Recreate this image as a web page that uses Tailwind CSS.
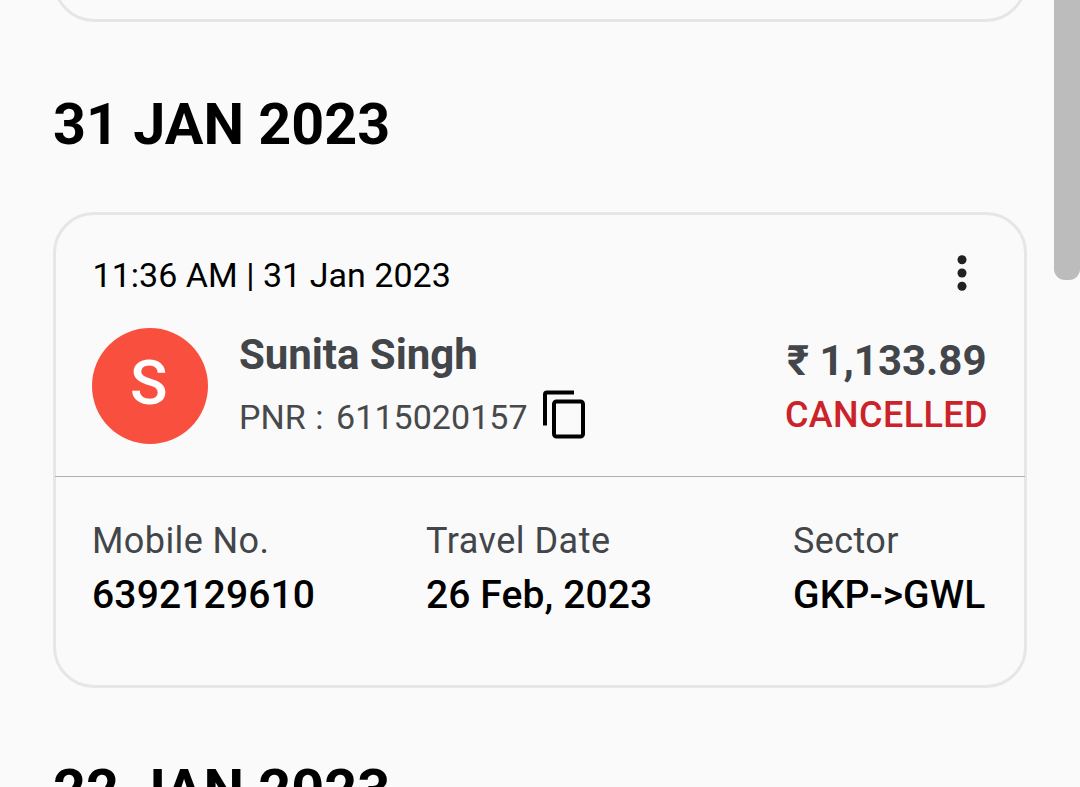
<!DOCTYPE html>
<html lang="en">
<head>
  <meta charset="UTF-8" />
  <meta name="viewport" content="width=device-width, initial-scale=1.0"/>
  <title>My Bookings</title>
  <script src="https://cdn.jsdelivr.net/npm/@tailwindcss/browser@4"></script>
</head>
<body class="bg-[#fafafa] font-[Roboto,sans-serif] text-black h-[787px] overflow-hidden relative">

  <main class="px-[53px]">
    <!-- end of the previous booking -->
    <div class="h-[22px] overflow-hidden flex items-end">
      <div class="h-[474px] w-full shrink-0 border-3 border-[#e6e6e6] rounded-[41px]"></div>
    </div>

    <h2 class="mt-[68px] h-[68px] leading-[70px] text-[57.5px] font-bold whitespace-nowrap">31 JAN 2023</h2>

    <section class="mt-[54px] h-[476px] border-3 border-[#e6e6e6] rounded-[41px]">
      <div class="flex items-center justify-between pl-[36.5px] pr-[53px] pt-[38px] h-[78px]">
        <p class="text-[34px] leading-10 pt-[4px] tracking-[0.03px]">11:36 AM | 31 Jan 2023</p>
        <svg class="w-[18px] h-10" viewBox="0 0 18 40" fill="#212121">
          <circle cx="9" cy="6.8" r="4.5"/><circle cx="9" cy="20" r="4.5"/><circle cx="9" cy="33.2" r="4.5"/>
        </svg>
      </div>

      <div class="flex pl-[36px] pr-[37px] pt-[35px] h-[183px]">
        <div class="size-[115.5px] rounded-full bg-[#f94f3e] text-white flex items-center justify-center text-[62px] font-medium leading-none pb-[5px] pr-[2px]">S</div>
        <div class="ml-[31.5px]">
          <p class="mt-[2px] text-[42px] leading-[50px] font-bold text-[#424549] tracking-[-0.05px]">Sunita Singh</p>
          <div class="flex items-center mt-[6px] h-[56px] text-[34px] text-[#48494b]">
            <p class="whitespace-nowrap pt-[6px] tracking-[0.05px]">PNR<span class="ml-px"> :</span> <span class="ml-[4px]">6115020157</span></p>
            <svg class="w-[42px] h-[49px] ml-[15.5px]" viewBox="0 0 42 49" fill="none" stroke="#000" stroke-width="4">
              <path d="M2 35.5V4.5Q2 2.5 4 2.5H31"/>
              <rect x="11" y="11.5" width="29" height="35" rx="2.5"/>
            </svg>
          </div>
        </div>
        <div class="ml-auto text-right">
          <p class="mt-[8px] text-[42px] leading-[50px] font-bold text-[#424549] pr-[0.5px]">₹ 1,133.89</p>
          <p class="-mr-px mt-[8px] text-[36px] leading-[42px] font-medium text-[#cc2229] tracking-[0.4px]">CANCELLED</p>
        </div>
      </div>

      <div class="-mx-px border-t border-[#b0b0b0] grid grid-cols-[334px_367px_auto] pl-[37px] pt-[42px]">
        <div>
          <p class="text-[36px] leading-[44px] text-[#424549] tracking-[0.4px]">Mobile No.</p>
          <p class="mt-[10px] text-[39px] leading-[44px] font-medium tracking-[0.15px]">6392129610</p>
        </div>
        <div>
          <p class="text-[36px] leading-[44px] text-[#424549] tracking-[0.5px]">Travel Date</p>
          <p class="mt-[10px] text-[39px] leading-[44px] font-medium tracking-[0.1px]">26 Feb, 2023</p>
        </div>
        <div>
          <p class="text-[36px] leading-[44px] text-[#424549] tracking-[0.4px]">Sector</p>
          <p class="mt-[10px] text-[39px] leading-[44px] font-medium tracking-[0.1px]">GKP-&gt;GWL</p>
        </div>
      </div>
    </section>

    <h2 class="mt-[68px] h-[68px] leading-[70px] text-[57.5px] font-bold whitespace-nowrap">22 JAN 2023</h2>
  </main>

  <!-- scrollbar thumb -->
  <div class="absolute top-0 right-0 w-[26px] h-[280px] bg-[#bcbcbc] rounded-b-[11px]"></div>

</body>
</html>
